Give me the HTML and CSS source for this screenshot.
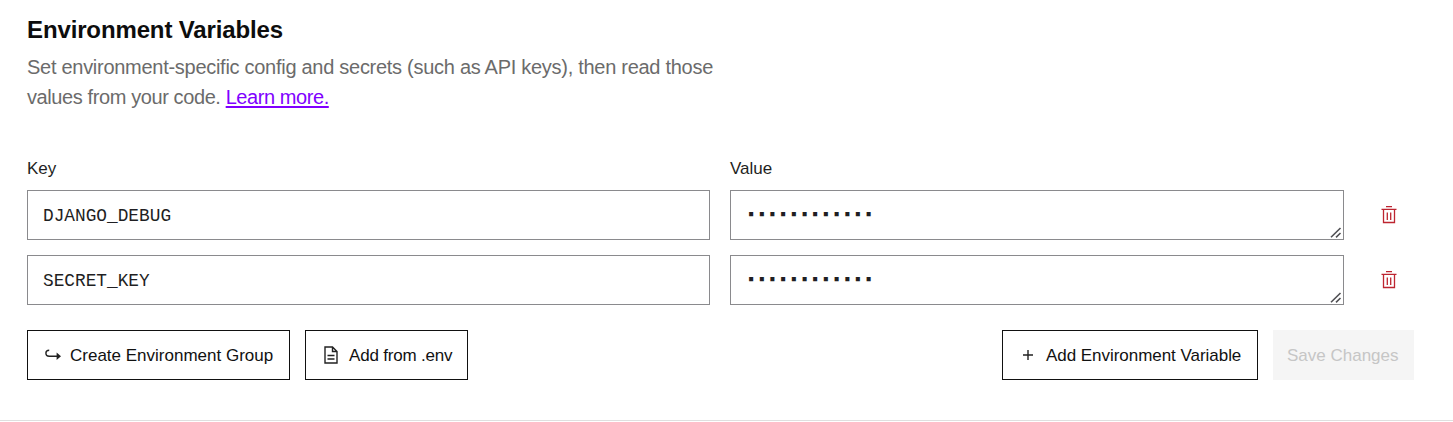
FILE: index.html
```html
<!DOCTYPE html>
<html lang="en">
<head>
<meta charset="utf-8">
<title>Environment Variables</title>
<link rel="stylesheet" href="styles.css">
</head>
<body>
<section class="panel">
  <h2 class="title">Environment Variables</h2>
  <p class="intro"><span class="intro-first">Set environment-specific config and secrets (such as API keys), then read those</span><br><span class="intro-second">values from your code. </span><a class="link" href="#">Learn more.</a></p>

  <div class="grid">
    <div class="label">Key</div>
    <div class="label">Value</div>
    <div></div>

    <div class="field">DJANGO_DEBUG</div>
    <div class="field secret"><span class="dots">▪▪▪▪▪▪▪▪▪▪▪▪</span>
      <svg class="grip" width="12" height="12" viewBox="0 0 12 12"><path d="M1 11.3 10.5 2M6 11.3 10.5 7"/></svg>
    </div>
    <button class="trash" aria-label="Delete"><svg width="16" height="18" viewBox="0 0 16 18"><path d="M5 .6h6M.5 3.4h15M2.5 3.5v13h11v-13M6.3 6.5v7.5M9.7 6.5v7.5"/></svg></button>

    <div class="field">SECRET_KEY</div>
    <div class="field secret"><span class="dots">▪▪▪▪▪▪▪▪▪▪▪▪</span>
      <svg class="grip" width="12" height="12" viewBox="0 0 12 12"><path d="M1 11.3 10.5 2M6 11.3 10.5 7"/></svg>
    </div>
    <button class="trash" aria-label="Delete"><svg width="16" height="18" viewBox="0 0 16 18"><path d="M5 .6h6M.5 3.4h15M2.5 3.5v13h11v-13M6.3 6.5v7.5M9.7 6.5v7.5"/></svg></button>
  </div>

  <div class="actions">
    <button class="btn group"><svg width="18" height="12" viewBox="0 0 18 12"><path d="M5.2 1.2C3 1.2 1.9 2.3 1.9 4S3 7.2 5.2 7.2H15"/><path class="solid" d="M12.6 3.4 17 7.2 12.6 11z"/></svg><span>Create Environment Group</span></button>
    <button class="btn env"><svg width="14" height="18" viewBox="0 0 14 18"><path d="M1 1h7.5L13 5.5V17H1zM8.5 1v4.5H13M3.5 9.5h7M3.5 13h7"/></svg><span>Add from .env</span></button>
    <span class="spacer"></span>
    <button class="btn add"><svg width="10" height="10" viewBox="0 0 10 10"><path d="M5 0v10M0 5h10"/></svg><span>Add Environment Variable</span></button>
    <button class="btn save" disabled><span>Save Changes</span></button>
  </div>
</section>
</body>
</html>
```
FILE: styles.css
```css
* { box-sizing: border-box; }
body {
  margin: 0;
  background: #fff;
  color: #1f1f23;
  font-family: "Liberation Sans", Arial, sans-serif;
}
.panel {
  height: 421px;
  padding: 15px 39px 0 27px;
  border-bottom: 1px solid #dfdfdf;
}
.title {
  margin: 0;
  color: #0d0d0d;
  font-size: 24px;
  line-height: 30px;
  font-weight: 700;
  letter-spacing: -0.13px;
}
.intro {
  margin: 7px 0 0;
  color: #6b6b6b;
  font-size: 20px;
  line-height: 30px;
  white-space: nowrap;
}
.intro-first { letter-spacing: -0.28px; }
.intro-second { letter-spacing: -0.4px; }
.link {
  color: #8000ff;
  letter-spacing: -0.43px;
  text-decoration-thickness: 2px;
  text-underline-offset: 2px;
}
.grid {
  display: grid;
  grid-template-columns: 683px 614px 50px;
  grid-template-rows: 20px 50px 50px;
  column-gap: 20px;
  row-gap: 15px;
  margin-top: 43px;
}
.label {
  font-size: 17px;
  line-height: 28px;
}
.field {
  position: relative;
  border: 1px solid #8a8a8d;
  padding: 0 15px;
  font-family: "Liberation Mono", monospace;
  font-size: 17.8px;
  line-height: 51px;
}
.dots {
  display: block;
  padding-left: 2px;
  font-family: "DejaVu Sans Mono", monospace;
  font-size: 10.5px;
  letter-spacing: 4.36px;
  line-height: 45px;
}
.grip {
  position: absolute;
  right: 1px;
  bottom: 1px;
  fill: none;
  stroke: #505054;
  stroke-width: 1.6;
}
.trash {
  border: 0;
  padding: 0;
  background: none;
  display: flex;
  align-items: center;
  justify-content: center;
}
.trash svg {
  fill: none;
  stroke: #bd2530;
  stroke-width: 1.3;
}
.actions {
  display: flex;
  gap: 15px;
  width: 1387px;
  margin-top: 25px;
}
.spacer { flex: 1; }
.btn {
  display: flex;
  align-items: center;
  height: 50px;
  padding: 0;
  border: 1px solid #111;
  background: #fff;
  color: #111;
  font: 17px/48px "Liberation Sans", Arial, sans-serif;
  white-space: nowrap;
}
.btn span { padding-top: 2px; line-height: 46px; }
.btn svg {
  flex: none;
  fill: none;
  stroke: #222;
  stroke-width: 1.4;
}
.btn .solid { fill: #222; stroke: none; }
.group { width: 263px; padding-left: 16px; gap: 8px; }
.env { width: 163px; padding-left: 18px; gap: 11px; letter-spacing: -0.2px; }
.add { width: 256px; padding-left: 20px; gap: 13px; letter-spacing: -0.04px; }
.save {
  width: 141px;
  padding-left: 13px;
  border-color: #f5f5f5;
  background: #f5f5f5;
  color: #c6c6c6;
}
```
